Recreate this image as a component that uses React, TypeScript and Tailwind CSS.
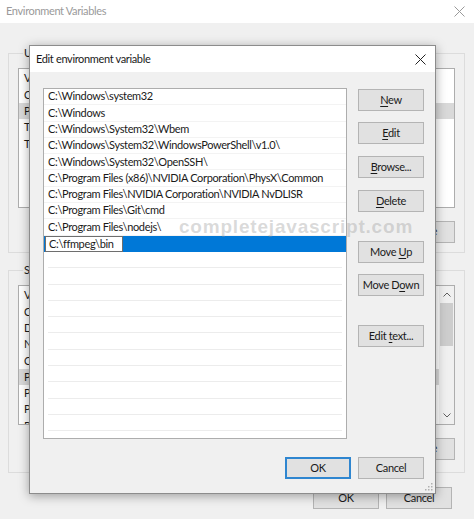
import React from "react"

const FONT = "font-['Lato','Open_Sans',sans-serif]"
const TXT = "text-[11px] tracking-[-0.35px]"

const paths = [
    "C:\\Windows\\system32",
    "C:\\Windows",
    "C:\\Windows\\System32\\Wbem",
    "C:\\Windows\\System32\\WindowsPowerShell\\v1.0\\",
    "C:\\Windows\\System32\\OpenSSH\\",
    "C:\\Program Files (x86)\\NVIDIA Corporation\\PhysX\\Common",
    "C:\\Program Files\\NVIDIA Corporation\\NVIDIA NvDLISR",
    "C:\\Program Files\\Git\\cmd",
    "C:\\Program Files\\nodejs\\",
]

const userVars = [
    { name: "Variable", head: true },
    { name: "OneDrive" },
    { name: "Path", sel: true },
    { name: "TEMP" },
    { name: "TMP" },
]

const sysVars = [
    { name: "Variable", head: true },
    { name: "ComSpec" },
    { name: "DriverData" },
    { name: "NUMBER_OF_PROCESSORS" },
    { name: "OS" },
    { name: "Path", sel: true },
    { name: "PATHEXT" },
    { name: "PROCESSOR_ARCHITECTURE" },
    { name: "PROCESSOR_IDENTIFIER" },
]

const CloseX = ({ color }: { color: string }) => (
    <svg width="11" height="11" viewBox="0 0 11 11">
        <path d="M0.5 0.5 L10.5 10.5 M10.5 0.5 L0.5 10.5" stroke={color} strokeWidth="1" fill="none" />
    </svg>
)

const Btn = ({ children, primary = false }: { children: React.ReactNode; primary?: boolean }) => (
    <div
        className={`w-[66px] h-[22px] shrink-0 flex items-center justify-center bg-[#e1e1e1] text-[#1a1a1a] ${TXT} ${
            primary ? "border-2 border-[#2f86d0]" : "border border-[#b4b4b4]"
        }`}
    >
        <span className="whitespace-pre">{children}</span>
    </div>
)

const U = ({ c }: { c: string }) => <span className="underline underline-offset-2">{c}</span>

const VarList = ({ rows, scroll = false }: { rows: { name: string; head?: boolean; sel?: boolean }[]; scroll?: boolean }) => (
    <div className="relative w-[437px] h-[140px] bg-white border border-[#adadad] overflow-hidden flex">
        <div className="flex-1 flex flex-col pt-[2px]">
            {rows.map((r, i) => (
                <div
                    key={i}
                    className={`h-[16.3px] shrink-0 flex items-center pl-[5px] text-[#1a1a1a] ${TXT} ${r.sel ? "bg-[#d9d9d9]" : ""}`}
                >
                    {r.name}
                </div>
            ))}
        </div>
        {scroll && (
            <div className="w-[15px] h-full bg-[#f0f0f0] flex flex-col items-center">
                <div className="h-[17px] flex items-center justify-center">
                    <svg width="8" height="5" viewBox="0 0 8 5">
                        <path d="M0.5 4.5 L4 1 L7.5 4.5" stroke="#606060" fill="none" />
                    </svg>
                </div>
                <div className="w-[13px] h-[43px] bg-[#cdcdcd]" />
                <div className="flex-1" />
                <div className="h-[17px] flex items-center justify-center">
                    <svg width="8" height="5" viewBox="0 0 8 5">
                        <path d="M0.5 0.5 L4 4 L7.5 0.5" stroke="#606060" fill="none" />
                    </svg>
                </div>
            </div>
        )}
    </div>
)

const App = () => {
    const emptyRows = Array.from({ length: 13 })

    return (
        <div className={`relative w-[474px] h-[519px] overflow-hidden bg-[#f0f0f0] ${FONT}`}>
            {/* Background window: Environment Variables */}
            <div className="h-[23px] bg-white flex items-center justify-between pl-[6px] pr-[9px]">
                <span className={`${TXT} text-[#9a9a9a]`}>Environment Variables</span>
                <CloseX color="#9a9a9a" />
            </div>

            <div className="flex flex-col pl-[8px]">
                <fieldset className="mt-[22px] w-[455px] h-[208px] border border-[#dcdcdc] px-[9px] pb-[10px]">
                    <legend className={`ml-[5px] px-[1px] ${TXT} text-[#1a1a1a]`}>User variables for admin</legend>
                    <div className="mt-[6px]">
                        <VarList rows={userVars} />
                    </div>
                    <div className="mt-[13px] flex justify-end gap-[7px]">
                        <Btn>New...</Btn>
                        <Btn>Edit...</Btn>
                        <Btn>Delete</Btn>
                    </div>
                </fieldset>

                <fieldset className="mt-[9px] w-[455px] h-[211px] border border-[#dcdcdc] px-[9px]">
                    <legend className={`ml-[5px] px-[1px] ${TXT} text-[#1a1a1a]`}>System variables</legend>
                    <div className="mt-[6px]">
                        <VarList rows={sysVars} scroll />
                    </div>
                    <div className="mt-[13px] flex justify-end gap-[7px]">
                        <Btn>New...</Btn>
                        <Btn>Edit...</Btn>
                        <Btn>Delete</Btn>
                    </div>
                </fieldset>

                <div className="mt-[14px] w-[444px] flex justify-end gap-[7px]">
                    <Btn>OK</Btn>
                    <Btn>Cancel</Btn>
                </div>
            </div>

            {/* Foreground dialog: Edit environment variable */}
            <div className="absolute left-[29px] top-[45px] w-[407px] h-[449px] flex flex-col border border-[#8c8c8c] bg-[#f0f0f0] shadow-[0_2px_10px_rgba(0,0,0,0.35)]">
                <div className="h-[26px] shrink-0 bg-white flex items-center justify-between pl-[6px] pr-[9px]">
                    <span className={`${TXT} text-[#1a1a1a]`}>Edit environment variable</span>
                    <CloseX color="#222" />
                </div>

                <div className="flex pl-[13px] pt-[16px] gap-[11px]">
                    <div className="w-[304px] h-[351px] bg-white border border-[#adadad] overflow-hidden flex flex-col">
                        {paths.map((p, i) => (
                            <div
                                key={i}
                                className={`h-[16.3px] shrink-0 flex items-center pl-[4px] border-b border-[#f3f3f3] ${TXT} text-[#1a1a1a] whitespace-nowrap`}
                            >
                                {p}
                            </div>
                        ))}
                        <div className="h-[16.3px] shrink-0 flex items-center bg-[#0078d7]">
                            <div className={`ml-[1px] w-[78px] h-full bg-white border border-[#6e6e6e] flex items-center pl-[3px] ${TXT} text-[#1a1a1a]`}>
                                C:\ffmpeg\bin
                            </div>
                        </div>
                        {emptyRows.map((_, i) => (
                            <div key={i} className="h-[16.3px] shrink-0 mx-[4px] border-b border-[#ececec]" />
                        ))}
                    </div>

                    <div className="flex flex-col pt-[1px]">
                        <Btn><U c="N" />ew</Btn>
                        <div className="h-[11px]" />
                        <Btn><U c="E" />dit</Btn>
                        <div className="h-[12px]" />
                        <Btn><U c="B" />rowse...</Btn>
                        <div className="h-[12px]" />
                        <Btn><U c="D" />elete</Btn>
                        <div className="h-[29px]" />
                        <Btn>Move <U c="U" />p</Btn>
                        <div className="h-[11px]" />
                        <Btn>Move D<U c="o" />wn</Btn>
                        <div className="h-[29px]" />
                        <Btn>Edit <U c="t" />ext...</Btn>
                    </div>
                </div>

                <div className="flex justify-end gap-[7px] pr-[11px] mt-[18px]">
                    <Btn primary>OK</Btn>
                    <Btn>Cancel</Btn>
                </div>

                <div className="absolute right-[2px] bottom-[2px]">
                    <svg width="8" height="8" viewBox="0 0 8 8" fill="#b0b0b0">
                        <rect x="6" y="0" width="1.5" height="1.5" />
                        <rect x="3" y="3" width="1.5" height="1.5" />
                        <rect x="6" y="3" width="1.5" height="1.5" />
                        <rect x="0" y="6" width="1.5" height="1.5" />
                        <rect x="3" y="6" width="1.5" height="1.5" />
                        <rect x="6" y="6" width="1.5" height="1.5" />
                    </svg>
                </div>
            </div>

            {/* watermark */}
            <div className="absolute left-[179px] top-[213px] font-['Liberation_Sans',sans-serif] font-bold text-[19px] tracking-[0.8px] text-[rgba(150,150,150,0.36)] pointer-events-none">
                completejavascript.com
            </div>
        </div>
    )
}

export default App
